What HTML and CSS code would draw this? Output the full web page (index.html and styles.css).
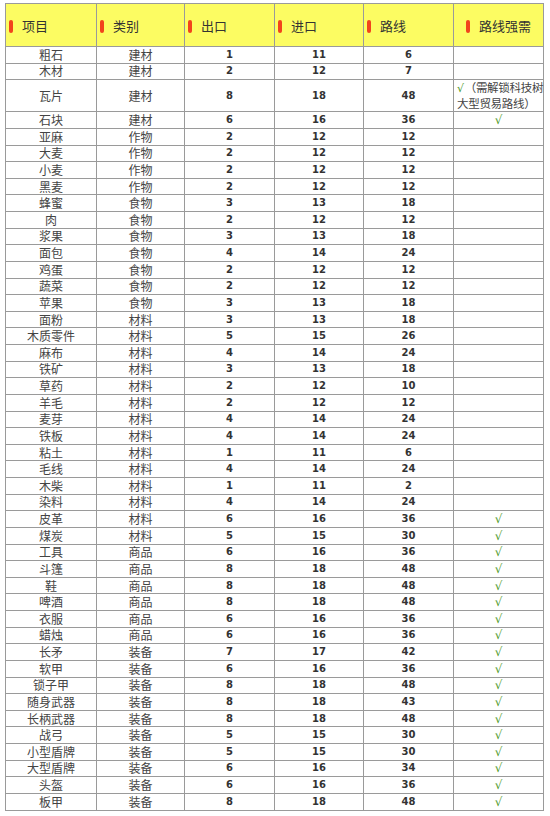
FILE: index.html
```html
<!DOCTYPE html>
<html lang="zh">
<head>
<meta charset="utf-8">
<title>项目路线表</title>
<link rel="stylesheet" href="styles.css">
</head>
<body>
<div class="wrap">
<table class="sheet">
<colgroup><col class="c1"><col class="c2"><col class="c3"><col class="c4"><col class="c5"><col class="c6"></colgroup>
<thead>
<tr>
<th><span class="pill"></span>项目</th>
<th><span class="pill"></span>类别</th>
<th><span class="pill"></span>出口</th>
<th><span class="pill"></span>进口</th>
<th><span class="pill"></span>路线</th>
<th class="center"><span class="pill"></span>路线强需</th>
</tr>
</thead>
<tbody>
<tr><td>粗石</td><td>建材</td><td class="n">1</td><td class="n">11</td><td class="n">6</td><td></td></tr>
<tr><td>木材</td><td>建材</td><td class="n">2</td><td class="n">12</td><td class="n">7</td><td></td></tr>
<tr class="tall"><td>瓦片</td><td>建材</td><td class="n">8</td><td class="n">18</td><td class="n">48</td><td class="note"><span class="ok">√</span>（需解锁科技树<br>大型贸易路线）</td></tr>
<tr><td>石块</td><td>建材</td><td class="n">6</td><td class="n">16</td><td class="n">36</td><td class="ok">√</td></tr>
<tr><td>亚麻</td><td>作物</td><td class="n">2</td><td class="n">12</td><td class="n">12</td><td></td></tr>
<tr><td>大麦</td><td>作物</td><td class="n">2</td><td class="n">12</td><td class="n">12</td><td></td></tr>
<tr><td>小麦</td><td>作物</td><td class="n">2</td><td class="n">12</td><td class="n">12</td><td></td></tr>
<tr><td>黑麦</td><td>作物</td><td class="n">2</td><td class="n">12</td><td class="n">12</td><td></td></tr>
<tr><td>蜂蜜</td><td>食物</td><td class="n">3</td><td class="n">13</td><td class="n">18</td><td></td></tr>
<tr><td>肉</td><td>食物</td><td class="n">2</td><td class="n">12</td><td class="n">12</td><td></td></tr>
<tr><td>浆果</td><td>食物</td><td class="n">3</td><td class="n">13</td><td class="n">18</td><td></td></tr>
<tr><td>面包</td><td>食物</td><td class="n">4</td><td class="n">14</td><td class="n">24</td><td></td></tr>
<tr><td>鸡蛋</td><td>食物</td><td class="n">2</td><td class="n">12</td><td class="n">12</td><td></td></tr>
<tr><td>蔬菜</td><td>食物</td><td class="n">2</td><td class="n">12</td><td class="n">12</td><td></td></tr>
<tr><td>苹果</td><td>食物</td><td class="n">3</td><td class="n">13</td><td class="n">18</td><td></td></tr>
<tr><td>面粉</td><td>材料</td><td class="n">3</td><td class="n">13</td><td class="n">18</td><td></td></tr>
<tr><td>木质零件</td><td>材料</td><td class="n">5</td><td class="n">15</td><td class="n">26</td><td></td></tr>
<tr><td>麻布</td><td>材料</td><td class="n">4</td><td class="n">14</td><td class="n">24</td><td></td></tr>
<tr><td>铁矿</td><td>材料</td><td class="n">3</td><td class="n">13</td><td class="n">18</td><td></td></tr>
<tr><td>草药</td><td>材料</td><td class="n">2</td><td class="n">12</td><td class="n">10</td><td></td></tr>
<tr><td>羊毛</td><td>材料</td><td class="n">2</td><td class="n">12</td><td class="n">12</td><td></td></tr>
<tr><td>麦芽</td><td>材料</td><td class="n">4</td><td class="n">14</td><td class="n">24</td><td></td></tr>
<tr><td>铁板</td><td>材料</td><td class="n">4</td><td class="n">14</td><td class="n">24</td><td></td></tr>
<tr><td>粘土</td><td>材料</td><td class="n">1</td><td class="n">11</td><td class="n">6</td><td></td></tr>
<tr><td>毛线</td><td>材料</td><td class="n">4</td><td class="n">14</td><td class="n">24</td><td></td></tr>
<tr><td>木柴</td><td>材料</td><td class="n">1</td><td class="n">11</td><td class="n">2</td><td></td></tr>
<tr><td>染料</td><td>材料</td><td class="n">4</td><td class="n">14</td><td class="n">24</td><td></td></tr>
<tr><td>皮革</td><td>材料</td><td class="n">6</td><td class="n">16</td><td class="n">36</td><td class="ok">√</td></tr>
<tr><td>煤炭</td><td>材料</td><td class="n">5</td><td class="n">15</td><td class="n">30</td><td class="ok">√</td></tr>
<tr><td>工具</td><td>商品</td><td class="n">6</td><td class="n">16</td><td class="n">36</td><td class="ok">√</td></tr>
<tr><td>斗篷</td><td>商品</td><td class="n">8</td><td class="n">18</td><td class="n">48</td><td class="ok">√</td></tr>
<tr><td>鞋</td><td>商品</td><td class="n">8</td><td class="n">18</td><td class="n">48</td><td class="ok">√</td></tr>
<tr><td>啤酒</td><td>商品</td><td class="n">8</td><td class="n">18</td><td class="n">48</td><td class="ok">√</td></tr>
<tr><td>衣服</td><td>商品</td><td class="n">6</td><td class="n">16</td><td class="n">36</td><td class="ok">√</td></tr>
<tr><td>蜡烛</td><td>商品</td><td class="n">6</td><td class="n">16</td><td class="n">36</td><td class="ok">√</td></tr>
<tr><td>长矛</td><td>装备</td><td class="n">7</td><td class="n">17</td><td class="n">42</td><td class="ok">√</td></tr>
<tr><td>软甲</td><td>装备</td><td class="n">6</td><td class="n">16</td><td class="n">36</td><td class="ok">√</td></tr>
<tr><td>锁子甲</td><td>装备</td><td class="n">8</td><td class="n">18</td><td class="n">48</td><td class="ok">√</td></tr>
<tr><td>随身武器</td><td>装备</td><td class="n">8</td><td class="n">18</td><td class="n">43</td><td class="ok">√</td></tr>
<tr><td>长柄武器</td><td>装备</td><td class="n">8</td><td class="n">18</td><td class="n">48</td><td class="ok">√</td></tr>
<tr><td>战弓</td><td>装备</td><td class="n">5</td><td class="n">15</td><td class="n">30</td><td class="ok">√</td></tr>
<tr><td>小型盾牌</td><td>装备</td><td class="n">5</td><td class="n">15</td><td class="n">30</td><td class="ok">√</td></tr>
<tr><td>大型盾牌</td><td>装备</td><td class="n">6</td><td class="n">16</td><td class="n">34</td><td class="ok">√</td></tr>
<tr><td>头盔</td><td>装备</td><td class="n">6</td><td class="n">16</td><td class="n">36</td><td class="ok">√</td></tr>
<tr><td>板甲</td><td>装备</td><td class="n">8</td><td class="n">18</td><td class="n">48</td><td class="ok">√</td></tr>
</tbody>
</table>
</div>
</body>
</html>
```
FILE: styles.css
```css
html, body {
  margin: 0;
  padding: 0;
  background: #ffffff;
}
.wrap {
  padding: 3px 0 0 5px;
}
.sheet {
  border-collapse: collapse;
  table-layout: fixed;
  width: 538px;
  font-family: "Noto Sans CJK SC", "Noto Sans", sans-serif;
  color: #444;
  border: 1px solid #8c8c8c;
}
.c1 { width: 91px; }
.c2 { width: 88px; }
.c3 { width: 90px; }
.c4 { width: 89px; }
.c5 { width: 90px; }
.c6 { width: 90px; }
.sheet th,
.sheet td {
  border: 1px solid #9a9a9a;
  padding: 0;
}
.sheet thead tr {
  height: 43px;
}
.sheet th {
  background: #fcfc62;
  font-size: 13px;
  font-weight: normal;
  color: #333;
  text-align: left;
  padding-left: 3px;
  vertical-align: middle;
  white-space: nowrap;
}
.sheet th.center {
  text-align: center;
  padding-left: 0;
}
.pill {
  display: inline-block;
  width: 4px;
  height: 13px;
  border-radius: 2px;
  background: #f2441c;
  margin-right: 9px;
  vertical-align: -2px;
}
.sheet tbody tr {
  height: 16.63px;
}
.sheet tbody tr.tall {
  height: 31.7px;
}
.sheet td {
  font-size: 12px;
  line-height: 14px;
  text-align: center;
  vertical-align: middle;
  white-space: nowrap;
}
.sheet td.n {
  font-family: "DejaVu Sans", "Liberation Sans", sans-serif;
  font-weight: bold;
  font-size: 10px;
  color: #333;
}
.ok {
  color: #4e9a2a;
  font-family: "DejaVu Sans", sans-serif;
  font-size: 11px;
}
.sheet td.note {
  text-align: left;
  padding-left: 3px;
  font-size: 11.5px;
  line-height: 15px;
  letter-spacing: -0.3px;
}
.sheet td.note .ok {
  margin-right: 1px;
}
```
